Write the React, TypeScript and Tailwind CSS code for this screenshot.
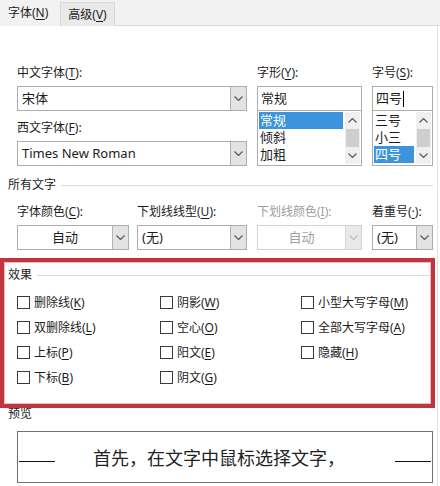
import React from "react";

const Chevron = ({ up, color = "#5a5a5a" }: { up?: boolean; color?: string }) => (
  <svg width="9" height="5" viewBox="0 0 9 5">
    <polyline
      points={up ? "0.5,4.5 4.5,0.5 8.5,4.5" : "0.5,0.5 4.5,4.5 8.5,0.5"}
      fill="none"
      stroke={color}
      strokeWidth="1.2"
    />
  </svg>
);

const U = ({ children }: { children: React.ReactNode }) => (
  <span className="underline underline-offset-[2px] decoration-[1px]">{children}</span>
);

const Label = ({ children, disabled }: { children: React.ReactNode; disabled?: boolean }) => (
  <div className={`h-[16px] leading-[16px] text-[12px] whitespace-nowrap ${disabled ? "text-[#9d9d9d]" : ""}`}>
    {children}
  </div>
);

const Combo = ({
  text,
  center,
  disabled,
}: {
  text: React.ReactNode;
  center?: boolean;
  disabled?: boolean;
}) => (
  <div className={`flex h-[25px] border bg-white ${disabled ? "border-[#d2d2d2]" : "border-[#adadad]"}`}>
    <div
      className={`flex-1 flex items-center px-[4px] text-[13px] whitespace-nowrap ${center ? "justify-center" : ""} ${
        disabled ? "text-[#a0a0a0]" : ""
      }`}
    >
      {text}
    </div>
    <div
      className={`w-[16px] flex items-center justify-center border-l ${
        disabled ? "bg-[#e9e9e9] border-[#d8d8d8]" : "bg-[#e3e3e3] border-[#b4b4b4]"
      }`}
    >
      <Chevron color={disabled ? "#bdbdbd" : "#5a5a5a"} />
    </div>
  </div>
);

const TextInput = ({ children }: { children: React.ReactNode }) => (
  <div className="flex items-center h-[25px] border border-[#adadad] bg-white px-[3px] text-[13px]">{children}</div>
);

const ListBox = ({ items, selected }: { items: string[]; selected: number }) => (
  <div className="flex h-[55px] border border-t-0 border-[#adadad] bg-white">
    <div className="flex-1 flex flex-col pt-[1px] pl-[1px] pr-[2px]">
      {items.map((it, i) => (
        <div
          key={i}
          className={`h-[17px] leading-[17px] text-[13px] px-[1px] ${i === selected ? "bg-[#3d94de] text-white" : ""}`}
        >
          {it}
        </div>
      ))}
    </div>
    <div className="w-[15px] flex flex-col bg-[#f0f0f0] my-[1px] mr-[1px]">
      <div className="h-[17px] flex items-center justify-center">
        <Chevron up />
      </div>
      <div className="flex-1 bg-[#cfcfcf] mx-[1px]" />
      <div className="h-[17px] flex items-center justify-center">
        <Chevron />
      </div>
    </div>
  </div>
);

const Section = ({ title }: { title: string }) => (
  <div className="flex items-center h-[16px] ml-[-9px]">
    <span className="text-[12px] leading-[16px]">{title}</span>
    <div className="flex-1 h-px bg-[#dcdcdc] ml-[5px]" />
  </div>
);

const Check = ({ children }: { children: React.ReactNode }) => (
  <div className="flex items-center h-[25px]">
    <div className="w-[13px] h-[13px] border border-[#3a3a3a] bg-white shrink-0" />
    <span className="ml-[4px] text-[12px] leading-[16px] whitespace-nowrap">{children}</span>
  </div>
);

export default function App() {
  return (
    <div className="w-[440px] h-[486px] bg-white relative overflow-hidden text-[#1c1c1c] font-['Noto_Sans','Noto_Sans_CJK_SC',sans-serif]">
      {/* Tabs */}
      <div className="h-[26px] bg-[#f2f2f2] flex items-end">
        <div className="h-[26px] w-[60px] flex items-center pl-[8px] text-[12px]">
          字体(<U>N</U>)
        </div>
        <div className="h-[24px] w-[55px] flex items-center justify-center text-[12px] bg-[#eaeaea] border border-b-0 border-[#d6d6d6]">
          高级(<U>V</U>)
        </div>
        <div className="flex-1 h-px bg-[#d9d9d9]" />
      </div>

      {/* Content */}
      <div className="w-[438px] h-[460px] border-r border-[#e2e2e2] pl-[17px] pr-[4px] pt-[39px]">
        <div className="w-[416px]">
          {/* Row 1 */}
          <div className="flex gap-[10px]">
            <div className="w-[230px] flex flex-col">
              <Label>
                中文字体(<U>T</U>):
              </Label>
              <div className="mt-[5px]">
                <Combo text="宋体" />
              </div>
              <div className="mt-[9px]">
                <Label>
                  西文字体(<U>F</U>):
                </Label>
              </div>
              <div className="mt-[5px]">
                <Combo text="Times New Roman" />
              </div>
            </div>
            <div className="w-[105px] flex flex-col">
              <Label>
                字形(<U>Y</U>):
              </Label>
              <div className="mt-[5px]">
                <TextInput>常规</TextInput>
                <ListBox items={["常规", "倾斜", "加粗"]} selected={0} />
              </div>
            </div>
            <div className="w-[61px] flex flex-col">
              <Label>
                字号(<U>S</U>):
              </Label>
              <div className="mt-[5px]">
                <TextInput>
                  四号<span className="inline-block w-px h-[16px] bg-black ml-[1px]" />
                </TextInput>
                <ListBox items={["三号", "小三", "四号"]} selected={2} />
              </div>
            </div>
          </div>

          {/* 所有文字 */}
          <div className="mt-[11px]">
            <Section title="所有文字" />
          </div>
          <div className="flex mt-[11px]">
            <div className="w-[112px]">
              <Label>
                字体颜色(<U>C</U>):
              </Label>
              <div className="mt-[5px]">
                <Combo text="自动" center />
              </div>
            </div>
            <div className="w-[110px] ml-[8px]">
              <Label>
                下划线线型(<U>U</U>):
              </Label>
              <div className="mt-[5px]">
                <Combo text="(无)" />
              </div>
            </div>
            <div className="w-[105px] ml-[10px]">
              <Label disabled>
                下划线颜色(<U>I</U>):
              </Label>
              <div className="mt-[5px]">
                <Combo text="自动" center disabled />
              </div>
            </div>
            <div className="w-[61px] ml-[10px]">
              <Label>
                着重号(<U>·</U>):
              </Label>
              <div className="mt-[5px]">
                <Combo text="(无)" />
              </div>
            </div>
          </div>

          {/* 效果 */}
          <div className="mt-[17px]">
            <Section title="效果" />
          </div>
          <div className="grid grid-cols-[143px_141px_1fr] mt-[7px]">
            <Check>
              删除线(<U>K</U>)
            </Check>
            <Check>
              阴影(<U>W</U>)
            </Check>
            <Check>
              小型大写字母(<U>M</U>)
            </Check>
            <Check>
              双删除线(<U>L</U>)
            </Check>
            <Check>
              空心(<U>O</U>)
            </Check>
            <Check>
              全部大写字母(<U>A</U>)
            </Check>
            <Check>
              上标(<U>P</U>)
            </Check>
            <Check>
              阳文(<U>E</U>)
            </Check>
            <Check>
              隐藏(<U>H</U>)
            </Check>
            <Check>
              下标(<U>B</U>)
            </Check>
            <Check>
              阴文(<U>G</U>)
            </Check>
          </div>

          {/* 预览 */}
          <div className="mt-[16px] ml-[-9px] h-[16px] leading-[16px] text-[12px]">预览</div>
          <div className="mt-[9px] h-[52px] border border-[#707070] flex items-center">
            <div className="w-[36px] h-px bg-[#111] ml-[1px] mt-[8px]" />
            <div className="ml-[38px] text-[18px] leading-[24px] text-[#222] font-['Noto_Sans_CJK_SC',sans-serif]">
              首先，在文字中鼠标选择文字，
            </div>
            <div className="w-[36px] h-px bg-[#111] ml-auto mr-[1px] mt-[8px]" />
          </div>
        </div>
      </div>

      {/* Red annotation box */}
      <div className="absolute left-0 top-[258px] w-[435px] h-[150px] border-[4px] border-[#c0353e] shadow-[inset_0_0_0_1px_#eeb8bc] pointer-events-none" />
    </div>
  );
}
